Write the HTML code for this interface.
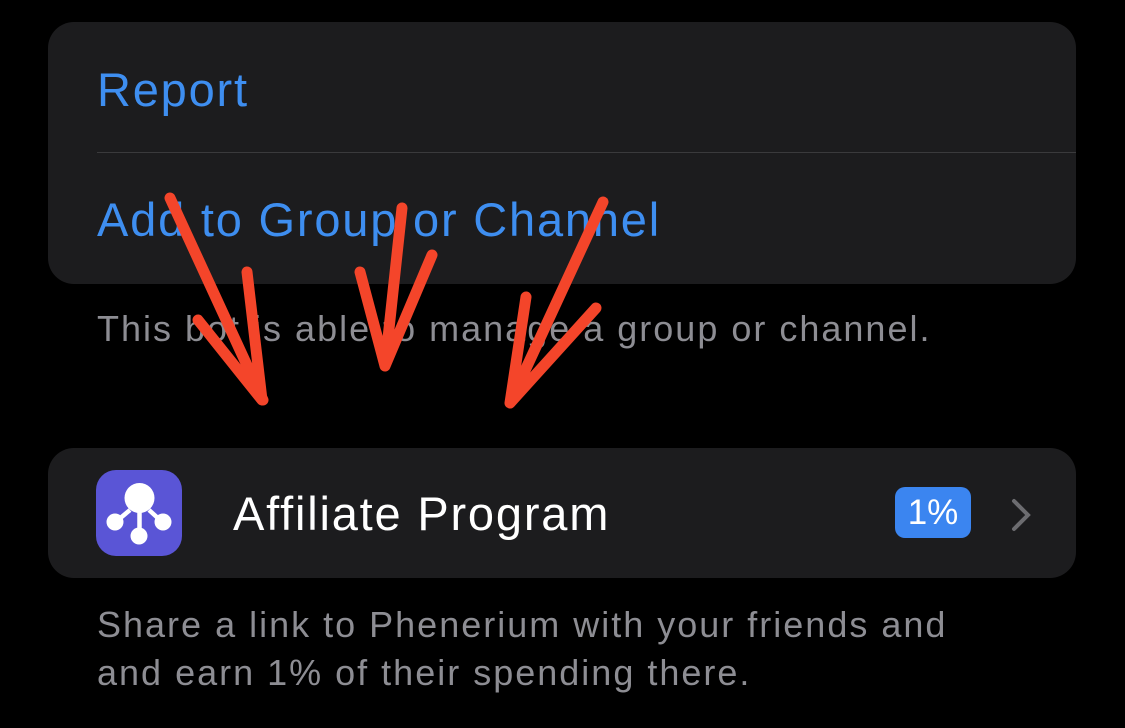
<!DOCTYPE html>
<html><head><style>
body{margin:0;width:1125px;height:728px;background:#000;overflow:hidden;font-family:"Liberation Sans",sans-serif;position:relative}
.card{position:absolute;left:48px;width:1028px;background:#1c1c1e;border-radius:26px}
.t{position:absolute;white-space:nowrap}
.blue{color:#3e8ef0;font-size:47px;letter-spacing:1.8px}
.gray{color:#8d8d93;font-size:36px;letter-spacing:2px}
</style></head><body>
<div class="card" style="top:22px;height:262px"></div>
<div class="t blue" style="left:97px;top:62px">Report</div>
<div style="position:absolute;left:97px;top:152px;width:979px;height:1px;background:#3a3a3c"></div>
<div class="t blue" style="left:97px;top:192px">Add to Group or Channel</div>
<div class="t gray" style="left:97px;top:308px">This bot is able to manage a group or channel.</div>
<div class="card" style="top:448px;height:130px"></div>
<div style="position:absolute;left:96px;top:470px;width:86px;height:86px;border-radius:20px;background:#5a55d6"></div>
<svg style="position:absolute;left:96px;top:470px" width="86" height="86" viewBox="0 0 86 86">
<g stroke="#fff" stroke-width="4.5"><line x1="43.5" y1="40" x2="43.5" y2="62"/><line x1="34" y1="40" x2="22" y2="50"/><line x1="53" y1="40" x2="64" y2="50"/></g>
<g fill="#fff"><circle cx="43.5" cy="28" r="15"/><circle cx="19" cy="52" r="8.5"/><circle cx="67" cy="52" r="8.5"/><circle cx="43" cy="66" r="8.5"/></g></svg>
<div class="t" style="left:233px;top:486px;color:#fff;font-size:47px;letter-spacing:1.8px">Affiliate Program</div>
<div style="position:absolute;left:895px;top:487px;width:76px;height:51px;border-radius:10px;background:#3b85f0;color:#fff;font-size:35px;text-align:center;line-height:51px">1%</div>
<svg style="position:absolute;left:1008px;top:498px" width="26" height="34"><path d="M6 3 L20 17 L6 31" stroke="#6c6c70" stroke-width="4" fill="none" stroke-linecap="round"/></svg>
<div class="t gray" style="left:97px;top:604px">Share a link to Phenerium with your friends and</div>
<div class="t gray" style="left:97px;top:652px">and earn 1% of their spending there.</div>
<svg style="position:absolute;left:0;top:0" width="1125" height="728">
<g stroke="#f4452a" stroke-width="11" fill="none" stroke-linecap="round" stroke-linejoin="round">
<path d="M170 198 L263 400 M198 320 L262 400 L247 272"/>
<path d="M402 208 L385 366 M360 272 L385 366 L432 255"/>
<path d="M603 202 L510 403 M526 297 L510 403 L596 308"/>
</g></svg>
</body></html>
